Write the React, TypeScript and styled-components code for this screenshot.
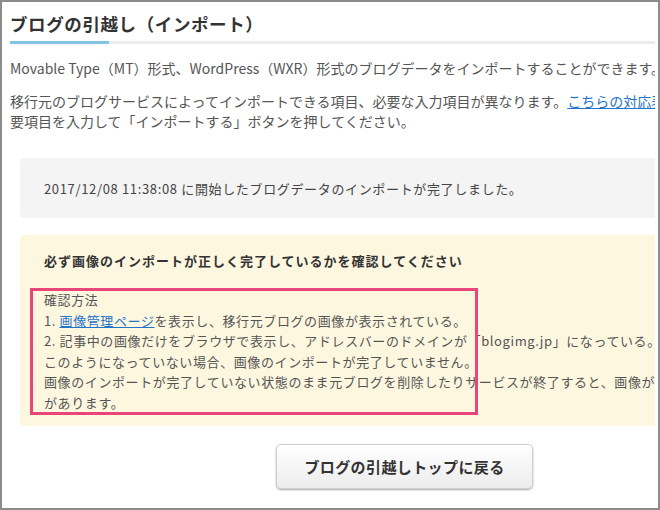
import React from "react";
import styled, { createGlobalStyle } from "styled-components";

const GlobalStyle = createGlobalStyle`
  html, body { margin: 0; padding: 0; background: #fff; }
  body { font-family: "Noto Sans CJK JP", "Noto Sans", sans-serif; }
`;

const Frame = styled.div`
  width: 660px;
  height: 510px;
  box-sizing: border-box;
  border: 2px solid #8c8c8c;
  background: #fff;
  overflow: hidden;
  padding-right: 3px;
`;

const Viewport = styled.div`
  height: 100%;
  overflow: hidden;
`;

const Page = styled.div`
  width: 787px;
  box-sizing: border-box;
  padding: 9px 0 0 8px;
  color: #555;
  font-size: 13px;
`;

const Title = styled.h1`
  margin: 0;
  font-size: 17.5px;
  font-weight: 700;
  line-height: 26px;
  color: #333;
  letter-spacing: 0.6px;
  padding-bottom: 4px;
  border-bottom: 3px solid #ececec;
  position: relative;
  &::after {
    content: "";
    position: absolute;
    left: 0;
    bottom: -3px;
    width: 99px;
    height: 3px;
    background: #83c4e2;
  }
`;

const Para = styled.p<{ $top: number }>`
  margin: ${(p) => p.$top}px 0 0;
  font-size: 14px;
  line-height: 20px;
  white-space: nowrap;
  color: #555;
`;

const Link = styled.a`
  color: #1f73c9;
  text-decoration: underline;
`;

const Notice = styled.div`
  margin: 27px 0 0 10px;
  height: 60px;
  background: #f4f4f4;
  border-radius: 4px;
  display: flex;
  align-items: center;
  padding-left: 24px;
  color: #444;
  font-size: 13px;
  letter-spacing: 0.65px;
`;

const Warning = styled.div`
  margin: 17px 0 0 10px;
  height: 191px;
  box-sizing: border-box;
  background: #fef7e0;
  border-radius: 4px;
  padding: 15px 0 0 24px;
  color: #444;
  font-size: 13px;
  white-space: nowrap;
`;

const WarningHead = styled.div`
  font-weight: 700;
  color: #333;
  line-height: 22px;
  letter-spacing: 1px;
`;

const Steps = styled.div`
  position: relative;
  margin-top: 18px;
  line-height: 20.6px;
  letter-spacing: 0.6px;
  color: #555;
`;

const Highlight = styled.div`
  position: absolute;
  left: -14px;
  top: -2px;
  width: 448px;
  height: 127px;
  box-sizing: border-box;
  border: 3px solid #e8457a;
  pointer-events: none;
`;

const ButtonRow = styled.div`
  display: flex;
  justify-content: center;
  padding: 18px 0 0 10px;
`;

const BackButton = styled.button`
  width: 257px;
  height: 45px;
  border: 1px solid #cfcfcf;
  border-radius: 5px;
  background: linear-gradient(#ffffff, #ececec);
  box-shadow: 0 1px 2px rgba(0, 0, 0, 0.35);
  font-family: inherit;
  font-size: 15px;
  font-weight: 700;
  letter-spacing: 0.4px;
  color: #333;
`;

export default function App() {
  return (
    <>
      <GlobalStyle />
      <Frame>
        <Viewport>
          <Page>
            <Title>ブログの引越し（インポート）</Title>
            <Para $top={14}>
              Movable Type（MT）形式、WordPress（WXR）形式のブログデータをインポートすることができます。
            </Para>
            <Para $top={13}>
              移行元のブログサービスによってインポートできる項目、必要な入力項目が異なります。
              <Link href="#">こちらの対応表</Link>をご確認の上、必
              <br />
              要項目を入力して「インポートする」ボタンを押してください。
            </Para>
            <Notice>2017/12/08 11:38:08 に開始したブログデータのインポートが完了しました。</Notice>
            <Warning>
              <WarningHead>必ず画像のインポートが正しく完了しているかを確認してください</WarningHead>
              <Steps>
                <Highlight />
                確認方法
                <br />
                1. <Link href="#">画像管理ページ</Link>を表示し、移行元ブログの画像が表示されている。
                <br />
                2. 記事中の画像だけをブラウザで表示し、アドレスバーのドメインが「blogimg.jp」になっている。
                <br />
                このようになっていない場合、画像のインポートが完了していません。
                <br />
                画像のインポートが完了していない状態のまま元ブログを削除したりサービスが終了すると、画像が表示されなくなる可能性
                <br />
                があります。
              </Steps>
            </Warning>
            <ButtonRow>
              <BackButton>ブログの引越しトップに戻る</BackButton>
            </ButtonRow>
          </Page>
        </Viewport>
      </Frame>
    </>
  );
}
